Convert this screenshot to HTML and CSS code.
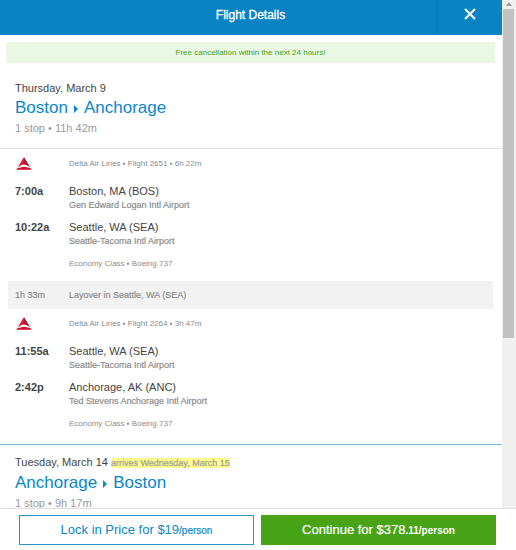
FILE: index.html
```html
<!DOCTYPE html>
<html lang="en">
<head>
<meta charset="utf-8">
<title>Flight Details</title>
<link rel="stylesheet" href="styles.css">
</head>
<body>
<svg class="defs" aria-hidden="true">
  <symbol id="delta" viewBox="0 0 16 13">
    <path fill="#e01933" d="M8 0L8 7.400Q5.200 7.600 1.800 10.200Z"/>
    <path fill="#b5152c" d="M8 0L14.200 10.200Q10.800 7.600 8 7.400Z"/>
    <path fill="#d0142f" d="M0.300 12.800L1.200 11.300Q3.500 10.900 5.500 10.200Q8 9.400 10.500 10.200Q12.500 10.900 14.800 11.300L15.700 12.800Z"/>
  </symbol>
  <symbol id="arrow" viewBox="0 0 4 8"><path fill="#0a87c9" d="M0 0L4 4L0 8Z"/></symbol>
</svg>
<div class="viewport">
  <main class="content">
    <header class="header">
      <h1 class="title">Flight Details</h1>
      <button class="close" type="button" aria-label="Close">
        <svg width="12" height="12" viewBox="0 0 12 12"><path d="M1 1L11 11M11 1L1 11" stroke="#fff" stroke-width="2"/></svg>
      </button>
    </header>
    <p class="notice">Free cancellation within the next 24 hours!</p>

    <section class="trip">
      <p class="date">Thursday, March 9</p>
      <h2 class="route">Boston <svg class="arrow"><use href="#arrow"/></svg> Anchorage</h2>
      <p class="summary">1 stop • 11h 42m</p>
    </section>

    <section class="leg">
      <svg class="logo" role="img" aria-label="Delta"><use href="#delta"/></svg>
      <p class="meta">Delta Air Lines ▪ Flight 2651 ▪ 6h 22m</p>
      <time class="time">7:00a</time>
      <div class="stop"><p class="city">Boston, MA (BOS)</p><p class="airport">Gen Edward Logan Intl Airport</p></div>
      <time class="time">10:22a</time>
      <div class="stop"><p class="city">Seattle, WA (SEA)</p><p class="airport">Seattle-Tacoma Intl Airport</p></div>
      <p class="meta cabin">Economy Class ▪ Boeing 737</p>
    </section>

    <div class="layover"><span>1h 33m</span><span>Layover in Seattle, WA (SEA)</span></div>

    <section class="leg last">
      <svg class="logo" role="img" aria-label="Delta"><use href="#delta"/></svg>
      <p class="meta">Delta Air Lines ▪ Flight 2264 ▪ 3h 47m</p>
      <time class="time">11:55a</time>
      <div class="stop"><p class="city">Seattle, WA (SEA)</p><p class="airport">Seattle-Tacoma Intl Airport</p></div>
      <time class="time">2:42p</time>
      <div class="stop"><p class="city">Anchorage, AK (ANC)</p><p class="airport">Ted Stevens Anchorage Intl Airport</p></div>
      <p class="meta cabin">Economy Class ▪ Boeing 737</p>
    </section>

    <section class="trip return">
      <p class="date">Tuesday, March 14 <mark class="arrives">arrives Wednesday, March 15</mark></p>
      <h2 class="route">Anchorage <svg class="arrow"><use href="#arrow"/></svg> Boston</h2>
      <p class="summary">1 stop • 9h 17m</p>
    </section>
  </main>
  <div class="scrollbar" aria-hidden="true">
    <svg class="scroll-up" viewBox="0 0 6 4"><path d="M3 0L6 4H0Z" fill="#999"/></svg>
    <div class="thumb"></div>
  </div>
</div>
<footer class="footer">
  <button class="action lock" type="button">Lock in Price for $19<small>/person</small></button>
  <button class="action continue" type="button">Continue for $378<small>.11/person</small></button>
</footer>
</body>
</html>
```
FILE: styles.css
```css
* { box-sizing: border-box; }

body {
  margin: 0;
  height: 100vh;
  display: flex;
  flex-direction: column;
  background: #fff;
  color: #444;
  font-family: "Liberation Sans", Arial, sans-serif;
  font-size: 11px;
  line-height: 14px;
}

p, h1, h2 { margin: 0; font-weight: 400; }

.defs { position: absolute; width: 0; height: 0; }

.viewport {
  flex: 1;
  min-height: 0;
  display: flex;
}

.content {
  flex: 1;
  overflow: hidden;
}

.header {
  display: grid;
  grid-template-columns: 64px 1fr 65px;
  height: 35px;
  background: #0a83c2;
}

.title {
  grid-column: 2;
  align-self: center;
  padding-bottom: 6px;
  color: #fff;
  font-size: 12px;
  text-align: center;
  -webkit-text-stroke: 0.3px #fff;
}

.close {
  border: 0;
  border-left: 1px solid #0870aa;
  padding: 0 0 9px;
  background: none;
}

.close svg { vertical-align: middle; }

.notice {
  margin: 7px 7px 0 6px;
  padding: 4px 0 3px;
  background: #eaf8e3;
  color: #48a317;
  font-size: 8px;
  text-align: center;
}

.trip { padding: 18px 15px 13px; }

.route {
  display: flex;
  align-items: center;
  gap: 6px;
  color: #0a87c9;
  font-size: 17px;
  line-height: 26px;
}

.arrow {
  width: 4px;
  height: 8px;
  margin-top: 2px;
}

.summary { color: #999; }

.leg {
  display: grid;
  grid-template-columns: 54px 1fr;
  padding: 8px 15px 10px;
  border-top: 1px solid #ddd;
}

.layover + .leg { border-top: 0; }

.leg.last { padding-bottom: 13px; }

.logo {
  width: 16px;
  height: 13px;
  margin-left: 1px;
}

.meta {
  margin-bottom: 13px;
  color: #8c8c8c;
  font-size: 8px;
}

.time {
  font-weight: 700;
}

.stop { margin-bottom: 8px; }

.airport {
  color: #8c8c8c;
  font-size: 9px;
  line-height: 14px;
  -webkit-text-stroke: 0.2px #8c8c8c;
}

.cabin {
  grid-column: 2;
  margin: 1px 0 0;
}

.layover {
  display: grid;
  grid-template-columns: 54px 1fr;
  margin: 0 9px 0 8px;
  padding: 7px;
  background: #f2f2f2;
  color: #8c8c8c;
  font-size: 9px;
  -webkit-text-stroke: 0.2px #8c8c8c;
}

.return {
  border-top: 1px solid #72b9df;
  padding-top: 10px;
}

.arrives {
  background: #ffff8c;
  color: #999;
  font-size: 9px;
  -webkit-text-stroke: 0.2px #999;
}

.scrollbar {
  width: 14px;
  padding: 2px 2px 0 1px;
  background: #f0f0f0;
}

.scroll-up {
  display: block;
  width: 6px;
  height: 4px;
  margin: 0 auto 3px;
}

.thumb {
  height: 65%;
  background: #c1c1c1;
}

.footer {
  display: grid;
  grid-template-columns: 1fr 1fr;
  gap: 7px;
  padding: 6px 20px 5px 19px;
  border-top: 1px solid #ddd;
}

.action {
  height: 30px;
  padding: 0;
  border: 1px solid #2795cf;
  background: #fff;
  color: #0a87c9;
  font: 13px/16px "Liberation Sans", Arial, sans-serif;
}

.action small { font-size: 10px; }

.lock small { -webkit-text-stroke: 0.2px #0a87c9; }

.continue {
  border-color: #48a317;
  background: #48a317;
  color: #fff;
  -webkit-text-stroke: 0.2px #fff;
}

.continue small { font-weight: 700; -webkit-text-stroke: 0; }
```
